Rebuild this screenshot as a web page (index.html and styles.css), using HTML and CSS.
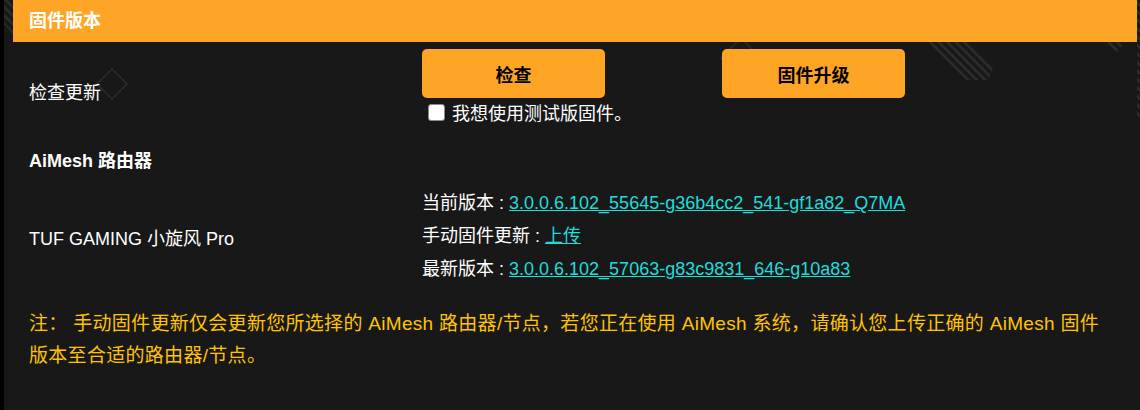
FILE: index.html
```html
<!DOCTYPE html>
<html lang="zh-CN">
<head>
    <meta charset="UTF-8">
    <meta name="viewport" content="width=device-width, initial-scale=1.0">
    <title>固件版本</title>
    <link rel="stylesheet" href="styles.css">
</head>
<body>
    <div class="page">
        <!-- sfondo decorativo -->
        <svg class="deco" width="1136" height="410" viewBox="0 0 1136 410" aria-hidden="true">
            <defs>
                <pattern id="righe" width="6" height="6" patternUnits="userSpaceOnUse" patternTransform="rotate(-45)">
                    <rect width="2.5" height="6" fill="#2d2d2d"/>
                </pattern>
            </defs>
            <polygon points="0,0 9,0 9,34 0,24" fill="url(#righe)"/>
            <polygon points="922,42 966,42 990,66 984,80 962,80" fill="url(#righe)"/>
            <polygon points="1100,42 1122,42 1112,52" fill="url(#righe)"/>
            <rect x="1133" y="0" width="3" height="120" fill="url(#righe)"/>
            <polygon points="108,69 123,84 108,99 93,84" fill="none" stroke="#2c2c2c" stroke-width="1.5"/>
            <polygon points="737,38 757,58 737,78 717,58" fill="none" stroke="#2c2c2c" stroke-width="1.5"/>
        </svg>

        <div class="panel">
            <div class="panel-head">固件版本</div>

            <div class="row row-check">
                <div class="label">检查更新</div>
                <div class="value">
                    <div class="btns">
                        <button class="btn" type="button">检查</button>
                        <button class="btn" type="button">固件升级</button>
                    </div>
                    <label class="beta"><input type="checkbox"> 我想使用测试版固件。</label>
                </div>
            </div>

            <div class="row row-title">
                <div class="label strong">AiMesh 路由器</div>
            </div>

            <div class="row row-node">
                <div class="label">TUF GAMING 小旋风 Pro</div>
                <div class="value info">
                    <div>当前版本 : <a href="#" class="ver">3.0.0.6.102_55645-g36b4cc2_541-gf1a82_Q7MA</a></div>
                    <div>手动固件更新 : <a href="#" class="ver">上传</a></div>
                    <div>最新版本 : <a href="#" class="ver">3.0.0.6.102_57063-g83c9831_646-g10a83</a></div>
                </div>
            </div>

            <p class="note">注： 手动固件更新仅会更新您所选择的 AiMesh 路由器/节点，若您正在使用 AiMesh 系统，请确认您上传正确的 AiMesh 固件版本至合适的路由器/节点。</p>
        </div>
    </div>
</body>
</html>
```

FILE: styles.css
```css
body {
    margin: 0;
    padding: 0;
    background-color: #000;
    color: #fff;
    font-family: "Liberation Sans", Arial, "Noto Sans CJK SC", sans-serif;
    font-size: 18px;
}
.page {
    position: relative;
    margin-left: 4px;
    height: 410px;
    padding: 0 3px 0 9px;
    background-color: #181818;
    overflow: hidden;
}
.deco {
    position: absolute;
    left: 0;
    top: 0;
}
.panel {
    position: relative;
}
.panel-head {
    height: 42px;
    line-height: 42px;
    padding-left: 16px;
    background-color: #ffa526;
    font-size: 18px;
    font-weight: bold;
}
.row {
    display: grid;
    grid-template-columns: 409px 1fr;
    align-items: center;
}
.label {
    padding-left: 16px;
}
.strong {
    font-weight: bold;
}
.row-check {
    padding: 7px 0 14px;
}
.row-check .label {
    padding-top: 10px;
}
.btns {
    display: flex;
}
.btn {
    width: 183px;
    height: 49px;
    margin-right: 117px;
    padding: 0;
    border: none;
    border-radius: 5px;
    background-color: #ffa526;
    color: #000;
    font-family: inherit;
    font-size: 18px;
    font-weight: bold;
    cursor: pointer;
}
.beta {
    display: flex;
    align-items: center;
    gap: 7px;
    height: 20px;
    margin: 4px 0 0 6px;
}
.beta input {
    appearance: none;
    width: 17px;
    height: 17px;
    margin: 0;
    border: 1px solid #8a8a8a;
    border-radius: 3px;
    background-color: #fff;
}
.row-title {
    height: 46px;
}
.row-node {
    padding: 5px 0;
}
.info {
    line-height: 33px;
}
.ver {
    color: #20dcdc;
}
.note {
    margin: 0;
    max-width: 1088px;
    padding: 17px 0 0 16px;
    line-height: 32px;
    font-size: 19px;
    letter-spacing: 0.3px;
    color: #ffc400;
}
```
